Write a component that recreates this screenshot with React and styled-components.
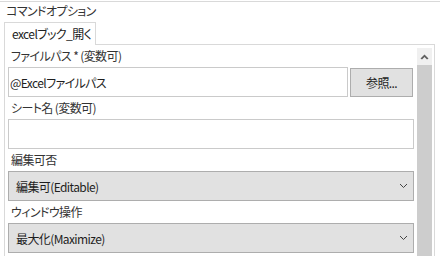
import React from "react";
import styled, { createGlobalStyle } from "styled-components";

const GlobalStyle = createGlobalStyle`
  html, body {
    margin: 0;
    padding: 0;
    background: #ffffff;
  }
  body {
    font-family: "Noto Sans CJK JP", "Noto Sans", sans-serif;
    font-size: 12px;
    letter-spacing: -0.6px;
    color: #1e1e1e;
    font-feature-settings: "palt";
  }
`;

const fields = [
  { label: "ファイルパス * (変数可)", kind: "file", value: "@Excelファイルパス" },
  { label: "シート名 (変数可)", kind: "text", value: "" },
  { label: "編集可否", kind: "select", value: "編集可(Editable)" },
  { label: "ウィンドウ操作", kind: "select", value: "最大化(Maximize)" },
];

function Chevron() {
  return (
    <svg width="9" height="6" viewBox="0 0 9 6">
      <polyline points="1,1 4.5,4.5 8,1" fill="none" stroke="#444" strokeWidth="1" />
    </svg>
  );
}

function UpArrow() {
  return (
    <svg width="9" height="6" viewBox="0 0 9 6">
      <polygon points="4.5,0.5 8.5,4.5 7,5.5 4.5,3 2,5.5 0.5,4.5" fill="#606060" />
    </svg>
  );
}

function App() {
  return (
    <Page>
      <GlobalStyle />
      <Title>コマンドオプション</Title>
      <TabBar>
        <Tab>excelブック_開く</Tab>
      </TabBar>
      <Panel>
        <Form>
          {fields.map((f) => (
            <Field key={f.label}>
              <Label>{f.label}</Label>
              {f.kind === "file" && (
                <Row>
                  <TextBox $grow readOnly value={f.value} />
                  <BrowseBtn>参照...</BrowseBtn>
                </Row>
              )}
              {f.kind === "text" && <TextBox readOnly value={f.value} />}
              {f.kind === "select" && (
                <SelectBox>
                  <span>{f.value}</span>
                  <Chevron />
                </SelectBox>
              )}
            </Field>
          ))}
        </Form>
        <ScrollBar>
          <ScrollUp>
            <UpArrow />
          </ScrollUp>
          <Thumb />
        </ScrollBar>
      </Panel>
    </Page>
  );
}

const Page = styled.div`
  width: 440px;
  height: 256px;
  overflow: hidden;
  display: flex;
  flex-direction: column;
  box-sizing: border-box;
  padding-top: 1px;
`;

const Title = styled.div`
  border-top: 1px solid #d9d9d9;
  height: 20px;
  line-height: 18px;
  padding-left: 6px;
  color: #333;
`;

const TabBar = styled.div`
  display: flex;
  padding-left: 4px;
  height: 23px;
`;

const Tab = styled.div`
  position: relative;
  z-index: 1;
  box-sizing: border-box;
  min-width: 89px;
  height: 23px;
  padding: 0 4px 0 7px;
  white-space: nowrap;
  line-height: 22px;
  border: 1px solid #d9d9d9;
  border-bottom: none;
  background: #fff;
  color: #222;
`;

const Panel = styled.div`
  flex: 1;
  display: flex;
  margin-left: 4px;
  width: 431px;
  box-sizing: border-box;
  border: 1px solid #d9d9d9;
  border-bottom: none;
  margin-top: -1px;
  padding-right: 2px;
`;

const Form = styled.div`
  flex: 1;
  padding: 0 3px;
  display: flex;
  flex-direction: column;
`;

const Field = styled.div`
  display: flex;
  flex-direction: column;
`;

const Label = styled.div`
  height: 22px;
  line-height: 22px;
  padding-left: 3px;
  white-space: nowrap;
  color: #333;
`;

const Row = styled.div`
  display: flex;
  gap: 2px;
`;

const TextBox = styled.input`
  flex: ${(p) => (p.$grow ? "1" : "none")};
  min-width: 0;
  box-sizing: border-box;
  height: 30px;
  margin: 0;
  padding: 0 1px;
  border: 1px solid #cacaca;
  background: #fff;
  font: inherit;
  letter-spacing: inherit;
  color: #1e1e1e;
  outline: none;
`;

const BrowseBtn = styled.button`
  width: 63px;
  height: 29px;
  margin: 1px 1px 0 0;
  box-sizing: border-box;
  border: 1px solid #adadad;
  background: #e1e1e1;
  font: inherit;
  letter-spacing: inherit;
  color: #1e1e1e;
  padding: 0;
`;

const SelectBox = styled.div`
  box-sizing: border-box;
  height: 30px;
  display: flex;
  align-items: center;
  justify-content: space-between;
  padding: 0 5px 0 7px;
  border: 1px solid #adadad;
  background: #e1e1e1;
  color: #1e1e1e;
`;

const ScrollBar = styled.div`
  width: 15px;
  margin-top: 3px;
  display: flex;
  flex-direction: column;
`;

const ScrollUp = styled.div`
  height: 17px;
  background: #f0f0f0;
  display: flex;
  align-items: center;
  justify-content: center;
`;

const Thumb = styled.div`
  flex: 1;
  background: #cdcdcd;
`;

export default App;
